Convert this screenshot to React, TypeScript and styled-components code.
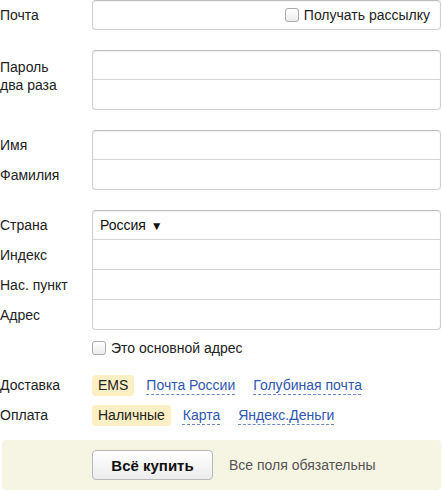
import styled, { createGlobalStyle } from 'styled-components';

const GlobalStyle = createGlobalStyle`
  body {
    margin: 0;
    background: #fff;
    font-family: "Liberation Sans", Arial, sans-serif;
    font-size: 14px;
    color: #222;
  }
`;

function Checkbox({label}: {label: string}) {
  return (
    <CheckLabel>
      <Box />
      {label}
    </CheckLabel>
  );
}

function App() {
  return (
    <>
      <GlobalStyle />
      <Form>
        <Row>
          <Label>Почта</Label>
          <Group>
            <Field align="right">
              <Checkbox label="Получать рассылку" />
            </Field>
          </Group>
        </Row>

        <Row>
          <Label multiline>Пароль<br />два раза</Label>
          <Group>
            <Field />
            <Field />
          </Group>
        </Row>

        <Row>
          <Labels>
            <RowLabel>Имя</RowLabel>
            <RowLabel>Фамилия</RowLabel>
          </Labels>
          <Group>
            <Field />
            <Field />
          </Group>
        </Row>

        <Row>
          <Labels>
            <RowLabel>Страна</RowLabel>
            <RowLabel>Индекс</RowLabel>
            <RowLabel>Нас. пункт</RowLabel>
            <RowLabel>Адрес</RowLabel>
          </Labels>
          <Group>
            <Field>
              <Select>Россия <Arrow>▼</Arrow></Select>
            </Field>
            <Field />
            <Field />
            <Field />
          </Group>
        </Row>

        <CheckRow>
          <Checkbox label="Это основной адрес" />
        </CheckRow>

        <Options>
          <OptionRow>
            <RowLabel>Доставка</RowLabel>
            <Choices>
              <Choice selected>EMS</Choice>
              <Choice>Почта России</Choice>
              <Choice>Голубиная почта</Choice>
            </Choices>
          </OptionRow>
          <OptionRow>
            <RowLabel>Оплата</RowLabel>
            <Choices>
              <Choice selected>Наличные</Choice>
              <Choice>Карта</Choice>
              <Choice>Яндекс.Деньги</Choice>
            </Choices>
          </OptionRow>
        </Options>

        <Footer>
          <BuyButton>Всё купить</BuyButton>
          <Note>Все поля обязательны</Note>
        </Footer>
      </Form>
    </>
  );
}

export default App;

const Form = styled.div`
  width: 441px;
  display: flex;
  flex-direction: column;
  gap: 20px;
`;

const Row = styled.div`
  display: grid;
  grid-template-columns: 92px 1fr;
`;

const Label = styled.div<{multiline?: boolean}>`
  display: flex;
  align-items: ${p => (p.multiline ? 'flex-start' : 'center')};
  padding-top: ${p => (p.multiline ? '8px' : '0')};
  line-height: 18px;
`;

const Labels = styled.div`
  display: flex;
  flex-direction: column;
`;

const RowLabel = styled.div`
  height: 30px;
  display: flex;
  align-items: center;
`;

const Group = styled.div`
  display: flex;
  flex-direction: column;
  border: 1px solid #cfcfcf;
  border-top-color: #bdbdbd;
  border-radius: 4px;
  box-shadow: inset 0 1px 2px rgba(0, 0, 0, 0.06);
  overflow: hidden;
`;

const Field = styled.div<{align?: 'right'}>`
  height: 29px;
  display: flex;
  align-items: center;
  justify-content: ${p => (p.align === 'right' ? 'flex-end' : 'flex-start')};
  padding: 0 10px 0 7px;
  & + & {
    border-top: 1px solid #d4d4d4;
    height: 29px;
  }
  &:first-child {
    height: 28px;
  }
`;

const Select = styled.div`
  font-size: 14px;
  color: #111;
`;

const Arrow = styled.span`
  font-size: 12px;
  margin-left: 1px;
`;

const CheckLabel = styled.label`
  display: flex;
  align-items: center;
  gap: 5px;
  font-size: 14px;
  color: #222;
`;

const Box = styled.span`
  width: 12px;
  height: 12px;
  border: 1px solid #aaa;
  border-radius: 3px;
  background: linear-gradient(#fff, #ececec);
  box-shadow: inset 0 1px 0 #fff;
`;

const CheckRow = styled.div`
  margin-top: -12px;
  padding-left: 92px;
  height: 20px;
  display: flex;
  align-items: center;
`;

const Options = styled.div`
  margin-top: -8px;
  display: flex;
  flex-direction: column;
`;

const OptionRow = styled.div`
  display: grid;
  grid-template-columns: 92px 1fr;
`;

const Choices = styled.div`
  display: flex;
  align-items: center;
  gap: 6px;
`;

const Choice = styled.span<{selected?: boolean}>`
  padding: 3px 6px 4px;
  border-radius: 4px;
  background: ${p => (p.selected ? '#fcefc3' : 'transparent')};
  color: ${p => (p.selected ? '#222' : '#2f57b0')};
  text-decoration: ${p => (p.selected ? 'none' : 'underline dashed #6d89c9')};
  text-underline-offset: 4px;
  text-decoration-thickness: 1px;
  line-height: 14px;
`;

const Footer = styled.div`
  margin: -10px 0 0 2px;
  height: 50px;
  box-sizing: border-box;
  padding: 0 0 0 90px;
  display: flex;
  align-items: center;
  gap: 16px;
  background: #f6f4e3;
  border-radius: 4px;
`;

const BuyButton = styled.button`
  width: 121px;
  height: 30px;
  border: 1px solid #b8b8b8;
  border-radius: 4px;
  background: linear-gradient(#ffffff, #ececec);
  font-family: "Liberation Sans", Arial, sans-serif;
  font-weight: bold;
  font-size: 15px;
  color: #111;
  padding: 0;
`;

const Note = styled.span`
  font-size: 14px;
  color: #555;
`;
